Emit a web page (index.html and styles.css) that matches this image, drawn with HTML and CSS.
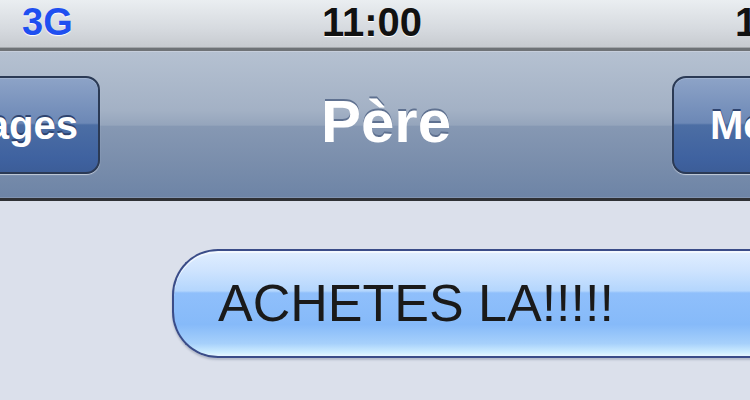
FILE: index.html
```html
<!DOCTYPE html>
<html lang="fr">
  <head>
    <meta charset="UTF-8" />
    <meta name="viewport" content="width=device-width, initial-scale=1.0" />
    <title>Père</title>
    <link rel="stylesheet" href="styles.css">
  </head>
  <body>
    <div class="screen">
      <div class="status">
        <span class="net">3G</span>
        <span class="time">11:00</span>
        <span class="batt">100 %</span>
      </div>
      <div class="nav">
        <button class="btn back">Messages</button>
        <h1 class="title">Père</h1>
        <button class="btn edit">Modifier</button>
      </div>
      <div class="thread">
        <div class="bubble">ACHETES LA!!!!!</div>
      </div>
    </div>
  </body>
</html>
```

FILE: styles.css
```css
*{
    padding: 0;
    margin: 0;
    box-sizing: border-box;
}
body{
    width: 750px;
    height: 400px;
    overflow: hidden;
    background-color: #dbe0eb;
    font-family: "Liberation Sans", Arial, sans-serif;
}
.screen{
    width: 750px;
    height: 400px;
    overflow: hidden;
}
/* status bar */
.status{
    height: 51px;
    display: grid;
    grid-template-columns: 322px 108px minmax(0, 1fr);
    align-items: center;
    font-weight: bold;
    font-size: 40px;
    background: linear-gradient(#eaeef1, #d6dadf 60%, #c6cacf);
    border-bottom: 3px solid #6f7377;
    box-shadow: inset 0 -1px 0 #a3a7ab;
    white-space: nowrap;
    padding-bottom: 6px;
}
.net{
    color: #1f4ff0;
    font-size: 38px;
    padding-left: 22px;
    text-shadow: 0 1px 1px #ffffff;
}
.time{
    color: #111;
    text-shadow: 0 1px 0 #ffffff;
}
.batt{
    color: #111;
    padding-left: 305px;
}
/* nav bar */
.nav{
    height: 150px;
    display: flex;
    align-items: center;
    background: linear-gradient(#b5c1d1, #a3b1c5 40%, #95a5bc 50%, #8698b3 51%, #7a8eac 75%, #6d84a6);
    border-top: 1px solid #c6cedb;
    border-bottom: 3px solid #2f3135;
    box-shadow: inset 0 -1px 0 #8193b0;
    white-space: nowrap;
}
.title{
    flex: 1;
    text-align: center;
    color: #ffffff;
    font-size: 60px;
    font-weight: bold;
    text-shadow: 0 -2px 0 #5f7190;
    padding-bottom: 8px;
}
.btn{
    height: 98px;
    border: 2px solid #2b3a55;
    border-radius: 14px;
    font-family: "Liberation Sans", Arial, sans-serif;
    font-weight: bold;
    font-size: 40px;
    color: #ffffff;
    text-shadow: 0 -2px 0 #2e4470;
    background: linear-gradient(#8da3c7, #6c88b6 48%, #4c6ea4 50%, #3f62a0 85%, #3c5d98);
    box-shadow: 0 1px 1px #c4ccda, inset 0 1px 0 #9fb2d0;
    flex-shrink: 0;
}
.back{
    width: 226px;
    margin-left: -126px;
    text-align: right;
    padding-right: 20px;
}
.edit{
    width: 210px;
    margin-right: -132px;
    text-align: left;
    padding-left: 36px;
}
/* messages */
.thread{
    padding-top: 48px;
    padding-left: 172px;
}
.bubble{
    width: 640px;
    height: 109px;
    border: 2px solid #3a4c88;
    border-right: none;
    border-radius: 46px 0 0 46px;
    background: linear-gradient(#e0eeff 0%, #cfe4fe 18%, #b4d6fd 38%, #8fbffb 40%, #86baf9 70%, #a6d0fb 88%, #cfeeff 97%, #e6f6ff);
    box-shadow: 0 2px 2px rgba(60, 70, 100, 0.25), inset 0 2px 0 rgba(255, 255, 255, 0.6);
    font-size: 52px;
    color: #1a1a1a;
    display: flex;
    align-items: center;
    padding-left: 44px;
    padding-bottom: 2px;
    white-space: nowrap;
}
```
